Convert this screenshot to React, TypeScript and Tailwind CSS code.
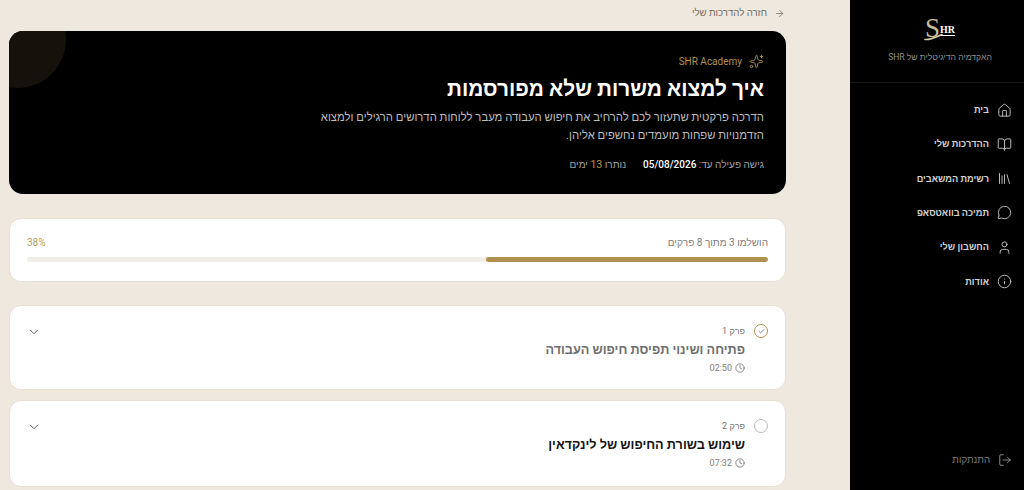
import { ArrowRight, BookOpen, ChevronDown, Clock, House, Info, Library, LogOut, MessageCircle, Sparkles, User, Check } from "lucide-react";

const navItems = [
  { label: "בית", icon: House },
  { label: "ההדרכות שלי", icon: BookOpen },
  { label: "רשימת המשאבים", icon: Library },
  { label: "תמיכה בוואטסאפ", icon: MessageCircle },
  { label: "החשבון שלי", icon: User },
  { label: "אודות", icon: Info },
];

const Sidebar = () => {
  return (
    <aside className="flex h-full w-[174px] shrink-0 flex-col bg-black">
      <div className="flex h-[83px] flex-col items-center border-b border-[#161616] pt-[17px] pl-[6px]">
        {/* Logo */}
        <div className="relative flex h-[22px] items-end [font-family:'Liberation_Serif',serif]" dir="ltr">
          <span className="text-[27px] leading-[22px] text-[#c9bd96]">S</span>
          <span className="mb-[3px] border-b border-white text-[10px] leading-[10px] font-bold text-white">HR</span>
          <svg className="absolute -bottom-[2px] -left-[1px]" width="22" height="9" viewBox="0 0 22 9" fill="none">
            <path d="M1 7.5C7 8 12 5 18 2.5" stroke="#d8cfae" strokeWidth="1.6" strokeLinecap="round" />
          </svg>
        </div>
        <p className="mt-[11px] text-[8.6px] leading-[14px] text-[#8f8f8f]">האקדמיה הדיגיטלית של SHR</p>
      </div>
      <nav className="flex flex-col gap-[8.3px] pt-[14px]">
        {navItems.map((item) => (
          <a key={item.label} className="flex h-[26px] items-center gap-[8px] pr-[12px] text-[#d2d2d2]">
            <item.icon className="size-[15px] text-[#c4c4c4]" strokeWidth={1.5} />
            <span className="text-[9.2px] font-semibold">{item.label}</span>
          </a>
        ))}
      </nav>
      <a className="mt-auto mb-[18px] flex h-[24px] items-center gap-[8px] pr-[12px] text-[#7d7d7d]">
        <LogOut className="size-[14px] text-[#9a9a9a]" strokeWidth={1.5} />
        <span className="text-[9.6px] font-medium">התנתקות</span>
      </a>
    </aside>
  );
};

const Hero = () => {
  return (
    <section className="relative h-[163px] overflow-hidden rounded-[14px] bg-black pt-[23px] pr-[22px] pl-[16px]">
      <div className="absolute -top-[40px] -left-[40px] size-[97px] rounded-full bg-[#15120b]" />
      <div className="relative flex items-center gap-[7px] text-[#b0924f]">
        <Sparkles className="size-[15px]" strokeWidth={1.4} />
        <span className="text-[10px]">SHR Academy</span>
      </div>
      <h1 className="relative mt-[4px] text-[20.8px] leading-[32px] font-bold text-white">איך למצוא משרות שלא מפורסמות</h1>
      <p className="relative mt-[4px] max-w-[445px] text-[11.3px] leading-[17.5px] text-[#bdbdbd]">
        הדרכה פרקטית שתעזור לכם להרחיב את חיפוש העבודה מעבר ללוחות הדרושים הרגילים ולמצוא הזדמנויות שפחות מועמדים נחשפים אליהן.
      </p>
      <div className="relative mt-[14px] flex items-center gap-[17px] text-[10px] leading-[14px] text-[#a3a3a3]">
        <span>
          גישה פעילה עד: <span className="text-[10px] font-medium text-white">05/08/2026</span>
        </span>
        <span>
          נותרו <span className="text-[10.5px] text-[#b8974e]">13</span> ימים
        </span>
      </div>
    </section>
  );
};

const Progress = () => {
  return (
    <section className="mt-[24px] h-[64px] rounded-[12px] border border-[#e6e0d5] bg-white px-[17px] pt-[16px]">
      <div className="flex items-center justify-between text-[10px] leading-[15px]">
        <span className="text-[#7b7b7b]">הושלמו 3 מתוך 8 פרקים</span>
        <span className="text-[#b09a63]">38%</span>
      </div>
      <div className="mt-[7px] h-[5px] overflow-hidden rounded-full bg-[#f1eee8]">
        <div className="h-full w-[38%] rounded-full bg-[#b0924f]" />
      </div>
    </section>
  );
};

type ChapterProps = {
  num: number;
  title: string;
  time: string;
  done?: boolean;
  height: string;
};

const Chapter = ({ num, title, time, done, height }: ChapterProps) => {
  return (
    <section className={`flex items-start gap-[9px] rounded-[12px] border border-[#e6e0d5] bg-white pt-[18px] pr-[17px] pl-[17px] ${height}`}>
      {done ? (
        <span className="flex size-[14px] shrink-0 items-center justify-center rounded-full border-[1.5px] border-[#b0924f] text-[#6e6e6e]">
          <Check className="size-[7px]" strokeWidth={3} />
        </span>
      ) : (
        <span className="size-[14px] shrink-0 rounded-full border-[1.5px] border-[#bcbcbc]" />
      )}
      <div className="flex-1">
        <p className="text-[9px] leading-[14px] text-[#777777]">פרק {num}</p>
        <h2 className={`mt-[2px] text-[12.7px] leading-[20px] font-bold ${done ? "text-[#6f6f6f]" : "text-[#141414]"}`}>{title}</h2>
        <div className="mt-[1px] flex items-center gap-[3px] text-[9px] leading-[14px] text-[#7e7e7e]">
          <Clock className="size-[10px] text-[#555555]" strokeWidth={1.6} />
          <span>{time}</span>
        </div>
      </div>
      <ChevronDown className="mt-[1px] size-[14px] text-[#555555]" strokeWidth={1.6} />
    </section>
  );
};

const App = () => {
  return (
    <div dir="rtl" className="flex h-screen overflow-hidden bg-[#efe8de] [font-family:Roboto,'Noto_Sans',sans-serif]">
      <Sidebar />
      <main className="min-w-0 flex-1 pr-[64px] pl-[9px]">
        <a className="flex h-[31px] items-center gap-[7px] pr-[1px] pb-[5px] text-[#6f6a62]">
          <ArrowRight className="size-[11px]" strokeWidth={1.6} />
          <span className="text-[9.6px]">חזרה להדרכות שלי</span>
        </a>
        <Hero />
        <Progress />
        <div className="mt-[23px] flex flex-col gap-[10px]">
          <Chapter num={1} title="פתיחה ושינוי תפיסת חיפוש העבודה" time="02:50" done height="h-[85px]" />
          <Chapter num={2} title="שימוש בשורת החיפוש של לינקדאין" time="07:32" height="h-[87px]" />
        </div>
      </main>
    </div>
  );
};

export default App;
